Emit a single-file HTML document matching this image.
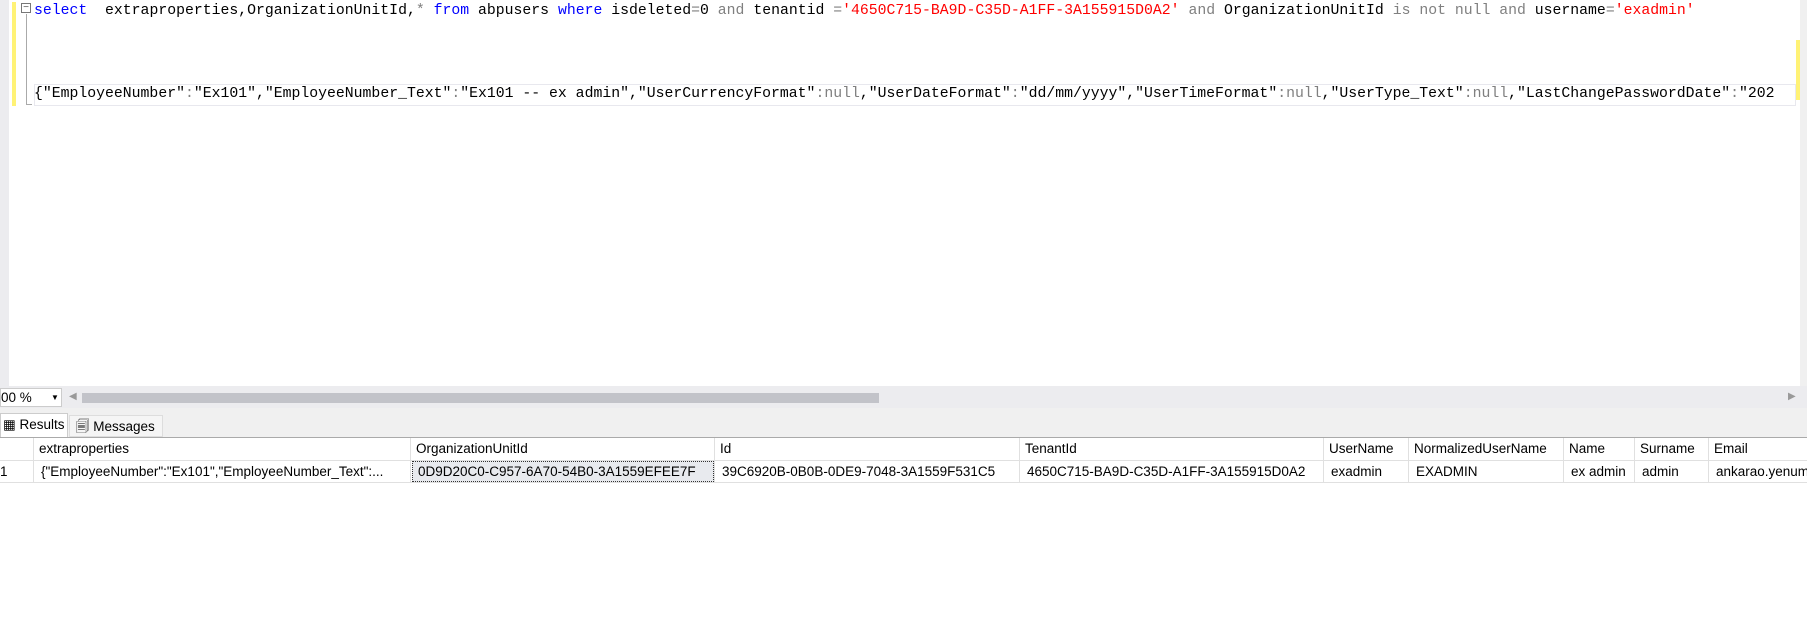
<!DOCTYPE html>
<html><head><meta charset="utf-8"><style>
body{margin:0;width:1807px;height:635px;overflow:hidden;background:#fff;position:relative;font-family:"Liberation Sans",sans-serif}
.a{position:absolute}
.code{font-family:"Liberation Mono",monospace;font-size:14.8px;white-space:pre;color:#000}
.k{color:#0000ff}.s{color:#ff0000}.g{color:#808080}
.cell{position:absolute;font-size:13.5px;white-space:nowrap;color:#000}
.vl{position:absolute;width:1px;background:#e0e0e0;top:438px;height:44px}
</style></head><body>
<div class="a" style="left:0;top:0;width:9px;height:386px;background:#ececef"></div>
<div class="a" style="left:12px;top:2px;width:4px;height:104px;background:#fff275"></div>
<div class="a" style="left:1796px;top:40px;width:4px;height:60px;background:#fff275"></div>
<div class="a" style="left:1800px;top:0;width:7px;height:386px;background:#f0f0f0"></div>
<div class="a" style="left:21px;top:3px;width:10px;height:10px;border:1px solid #777;box-sizing:border-box;font-size:10px;line-height:8px;text-align:center;color:#555">−</div>
<div class="a" style="left:26px;top:14px;width:1px;height:90px;background:#aaa"></div>
<div class="a" style="left:26px;top:104px;width:6px;height:1px;background:#aaa"></div>
<div class="a code" style="left:34px;top:3px"><span class="k">select</span>  extraproperties,OrganizationUnitId,<span class="g">*</span> <span class="k">from</span> abpusers <span class="k">where</span> isdeleted<span class="g">=</span>0 <span class="g">and</span> tenantid <span class="g">=</span><span class="s">'4650C715-BA9D-C35D-A1FF-3A155915D0A2'</span> <span class="g">and</span> OrganizationUnitId <span class="g">is not null and</span> username<span class="g">=</span><span class="s">'exadmin'</span></div>
<div class="a" style="left:34px;top:84px;width:1762px;height:22px;border:1px solid #e8e8ee;box-sizing:border-box"></div>
<div class="a code" style="left:34px;top:86px">{"EmployeeNumber"<span class="g">:</span>"Ex101","EmployeeNumber_Text"<span class="g">:</span>"Ex101 -- ex admin","UserCurrencyFormat"<span class="g">:null</span>,"UserDateFormat"<span class="g">:</span>"dd/mm/yyyy","UserTimeFormat"<span class="g">:null</span>,"UserType_Text"<span class="g">:null</span>,"LastChangePasswordDate"<span class="g">:</span>"202</div>
<div class="a" style="left:0;top:386px;width:1807px;height:22px;background:#ececef"></div>
<div class="a" style="left:0;top:388px;width:62px;height:19px;background:#fff;border:1px solid #ccc;box-sizing:border-box;font-size:13.5px;line-height:17px">00 %<span style="position:absolute;left:50px;font-size:8px">▼</span></div>
<div class="a" style="left:69px;top:391px;font-size:10px;color:#999">◀</div>
<div class="a" style="left:82px;top:393px;width:797px;height:10px;background:#c2c3c9"></div>
<div class="a" style="left:1788px;top:391px;font-size:10px;color:#999">▶</div>
<div class="a" style="left:0;top:408px;width:1807px;height:30px;background:#f0f0f0"></div>
<div class="a" style="left:0;top:413px;width:68px;height:25px;background:#fff;border:1px solid #ccc;border-bottom:none;box-sizing:border-box;font-size:13.5px;line-height:22px;padding-left:2px">▦ Results</div>
<div class="a" style="left:69px;top:415px;width:94px;height:22px;background:#f5f5f5;border:1px solid #ddd;box-sizing:border-box;font-size:13.5px;line-height:22px;padding-left:6px">🗐 Messages</div>
<div class="a" style="left:0;top:437px;width:1807px;height:1px;background:#aaa"></div>
<div class="a" style="left:0;top:460px;width:1807px;height:1px;background:#e0e0e0"></div>
<div class="a" style="left:0;top:482px;width:1807px;height:1px;background:#e0e0e0"></div>
<div class="vl" style="left:33px"></div><div class="vl" style="left:410px"></div><div class="vl" style="left:714px"></div><div class="vl" style="left:1019px"></div><div class="vl" style="left:1323px"></div><div class="vl" style="left:1408px"></div><div class="vl" style="left:1563px"></div><div class="vl" style="left:1634px"></div><div class="vl" style="left:1708px"></div>
<div class="a" style="left:412px;top:461px;width:302px;height:21px;background:#e8eaee;border:1px dotted #333;box-sizing:border-box"></div>
<div class="cell" style="left:39px;top:441px">extraproperties</div>
<div class="cell" style="left:416px;top:441px">OrganizationUnitId</div>
<div class="cell" style="left:720px;top:441px">Id</div>
<div class="cell" style="left:1025px;top:441px">TenantId</div>
<div class="cell" style="left:1329px;top:441px">UserName</div>
<div class="cell" style="left:1414px;top:441px">NormalizedUserName</div>
<div class="cell" style="left:1569px;top:441px">Name</div>
<div class="cell" style="left:1640px;top:441px">Surname</div>
<div class="cell" style="left:1714px;top:441px">Email</div>
<div class="cell" style="left:0;top:464px">1</div>
<div class="cell" style="left:41px;top:464px">{"EmployeeNumber":"Ex101","EmployeeNumber_Text":...</div>
<div class="cell" style="left:418px;top:464px">0D9D20C0-C957-6A70-54B0-3A1559EFEE7F</div>
<div class="cell" style="left:722px;top:464px">39C6920B-0B0B-0DE9-7048-3A1559F531C5</div>
<div class="cell" style="left:1027px;top:464px">4650C715-BA9D-C35D-A1FF-3A155915D0A2</div>
<div class="cell" style="left:1331px;top:464px">exadmin</div>
<div class="cell" style="left:1416px;top:464px">EXADMIN</div>
<div class="cell" style="left:1571px;top:464px">ex admin</div>
<div class="cell" style="left:1642px;top:464px">admin</div>
<div class="cell" style="left:1716px;top:464px">ankarao.yenum</div>
</body></html>
